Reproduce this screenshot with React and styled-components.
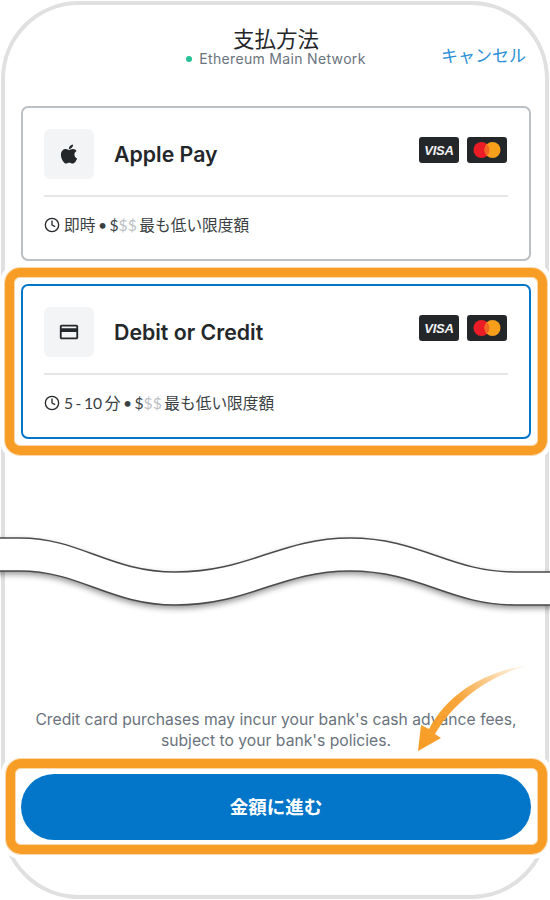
import React from 'react';
import styled, { createGlobalStyle } from 'styled-components';
import { Clock } from 'lucide-react';
import { FaApple } from 'react-icons/fa';
import { MdOutlineCreditCard } from 'react-icons/md';

const GlobalStyle = createGlobalStyle`
  html, body {
    margin: 0;
    padding: 0;
    background: #fff;
  }
  body {
    font-family: Inter, "Noto Sans CJK JP", sans-serif;
    color: #24272a;
  }
`;

const Page = styled.div`
  position: relative;
  width: 550px;
  height: 900px;
  padding: 1px;
  box-sizing: border-box;
  overflow: hidden;
  background: #fff;
`;

const Phone = styled.div`
  box-sizing: border-box;
  height: 898px;
  border: 4px solid #e0e0e0;
  border-radius: 78px;
  padding: 0 14px 55px 16px;
  display: flex;
  flex-direction: column;
`;

const Header = styled.header`
  display: grid;
  grid-template-columns: 1fr auto 1fr;
  height: 101px;
  padding-top: 21px;
  box-sizing: border-box;
  align-items: start;
`;

const TitleBlock = styled.div`
  grid-column: 2;
  display: flex;
  flex-direction: column;
  align-items: center;
`;

const Title = styled.h1`
  margin: 0;
  font: 400 21.5px/24px "Noto Sans CJK JP", sans-serif;
  color: #24272a;
`;

const Network = styled.div`
  display: flex;
  align-items: center;
  gap: 7px;
  font: 400 14px/18px Inter, sans-serif;
  letter-spacing: 0.33px;
  color: #6a737d;
  white-space: nowrap;
`;

const Dot = styled.span`
  width: 6px;
  height: 6px;
  border-radius: 50%;
  background: #28c196;
`;

const Cancel = styled.button`
  grid-column: 3;
  justify-self: end;
  margin: 17px 5px 0 0;
  padding: 0;
  border: 0;
  background: none;
  font: 400 17px/24px "Noto Sans CJK JP", sans-serif;
  color: #2a8fd8;
`;

const Cards = styled.div`
  display: flex;
  flex-direction: column;
  gap: 23px;
`;

const Card = styled.div`
  position: relative;
  box-sizing: border-box;
  height: 155px;
  padding: 21px 21px 0;
  border: 2px solid ${(p) => (p.$selected ? '#0376c9' : '#bbc0c5')};
  border-radius: 7px;
`;

const Ring = styled.div`
  position: absolute;
  inset: ${(p) => p.$inset};
  border: 9px solid #f79c25;
  border-radius: 15px;
  box-shadow: 0 0 0 1px #fbd9ad, inset 0 0 0 1px #fbd9ad, 0 0 0 5px #fff;
  pointer-events: none;
`;

const CardTop = styled.div`
  display: flex;
  align-items: flex-start;
  height: 66px;
  border-bottom: 2px solid #e4e6e8;
`;

const IconBox = styled.div`
  width: 50px;
  height: 50px;
  border-radius: 6px;
  background: #f2f4f6;
  color: #24272a;
  display: flex;
  align-items: center;
  justify-content: center;
  flex: none;
  font-size: 22px;
`;

const CardName = styled.div`
  margin-left: 20px;
  font: 600 21.3px/50px Inter, sans-serif;
  flex: 1;
`;

const Brands = styled.div`
  display: flex;
  gap: 8px;
  margin: 8px 1px 0 0;
`;

const Brand = styled.div`
  width: 40px;
  height: 26px;
  border-radius: 3px;
  background: #24272a;
  display: flex;
  align-items: center;
  justify-content: center;
`;

const VisaMark = styled.span`
  font: italic 700 13px/1 "Liberation Sans", sans-serif;
  color: #f2f3f4;
  letter-spacing: -0.2px;
`;

const Meta = styled.div`
  display: flex;
  align-items: center;
  gap: 4px;
  height: 55px;
  font: 400 15.7px/20px Lato, "Noto Sans CJK JP", sans-serif;
  word-spacing: -1.5px;
  color: #3a3f44;
`;

const Muted = styled.span`
  color: #bbc0c5;
`;

const Spacer = styled.div`
  flex: 1;
`;

const Note = styled.p`
  margin: 0 0 23px;
  text-align: center;
  font: 400 15.7px/21px Inter, sans-serif;
  color: #6a737d;
  white-space: nowrap;
`;

const ButtonWrap = styled.div`
  position: relative;
`;

const Submit = styled.button`
  display: block;
  width: 100%;
  height: 66px;
  padding: 0 0 3px;
  border: 0;
  border-radius: 33px;
  background: #0376c9;
  color: #fff;
  font: 700 18.5px/24px "Noto Sans CJK JP", sans-serif;
`;

const Overlay = styled.svg`
  position: absolute;
  left: 0;
  top: 0;
  pointer-events: none;
`;

const WaveFill = styled.path`
  fill: #fff;
  filter: drop-shadow(0 3px 3px rgba(0, 0, 0, 0.45));
`;

const WaveLine = styled.path`
  fill: none;
  stroke: #4a4a4a;
  stroke-width: 1.5;
`;

const TOP_LINE = 'M -5 538 H 20 C 80 538, 110 572, 175 572 C 250 572, 280 538, 350 538 C 420 538, 450 572, 515 572 H 555';
const BOTTOM_LINE = 'M -5 571 H 20 C 80 571, 110 605, 175 605 C 250 605, 280 571, 350 571 C 420 571, 450 605, 515 605 H 555';
const BAND = `${TOP_LINE} V 605 H 515 C 450 605, 420 571, 350 571 C 280 571, 250 605, 175 605 C 110 605, 80 571, 20 571 H -5 Z`;

const CardBrands = () => (
  <Brands>
    <Brand>
      <VisaMark>VISA</VisaMark>
    </Brand>
    <Brand>
      <svg width="28" height="18" viewBox="0 0 28 18">
        <circle cx="8.5" cy="9" r="8" fill="#eb1c26" />
        <circle cx="19.5" cy="9" r="8" fill="#f79e1b" />
        <path d="M14 3.2a8 8 0 0 1 0 11.6a8 8 0 0 1 0-11.6z" fill="#f26522" />
      </svg>
    </Brand>
  </Brands>
);

const PayCard = ({ icon, name, speed, selected }) => (
  <Card $selected={selected}>
    <CardTop>
      <IconBox>{icon}</IconBox>
      <CardName>{name}</CardName>
      <CardBrands />
    </CardTop>
    <Meta>
      <Clock size={16} strokeWidth={2} color="#24272a" />
      <span>
        {speed} • $<Muted>$$</Muted> 最も低い限度額
      </span>
    </Meta>
    {selected && <Ring $inset="-18px" />}
  </Card>
);

export default function App() {
  return (
    <>
      <GlobalStyle />
      <Page>
        <Phone>
          <Header>
            <TitleBlock>
              <Title>支払方法</Title>
              <Network>
                <Dot />
                Ethereum Main Network
              </Network>
            </TitleBlock>
            <Cancel>キャンセル</Cancel>
          </Header>
          <Cards>
            <PayCard icon={<FaApple />} name="Apple Pay" speed="即時" />
            <PayCard icon={<MdOutlineCreditCard />} name="Debit or Credit" speed="5 - 10 分" selected />
          </Cards>
          <Spacer />
          <Note>
            Credit card purchases may incur your bank's cash advance fees,
            <br />
            subject to your bank's policies.
          </Note>
          <ButtonWrap>
            <Submit>金額に進む</Submit>
            <Ring $inset="-15px -16px -14px -15px" />
          </ButtonWrap>
        </Phone>
        <Overlay width="550" height="900" viewBox="0 0 550 900">
          <defs>
            <linearGradient id="arrowFade" x1="530" y1="665" x2="420" y2="750" gradientUnits="userSpaceOnUse">
              <stop offset="0" stopColor="#f79c25" stopOpacity="0" />
              <stop offset="0.55" stopColor="#f79c25" stopOpacity="0.9" />
              <stop offset="1" stopColor="#f79c25" />
            </linearGradient>
          </defs>
          <WaveFill d={BAND} />
          <WaveLine d={TOP_LINE} />
          <WaveLine d={BOTTOM_LINE} />
          <path
            d="M530 665 C 490 670, 450 690, 429 729 L 421 725 L 418 751 L 441 738 L 435 734 C 455 700, 490 675, 530 665 Z"
            fill="url(#arrowFade)"
          />
        </Overlay>
      </Page>
    </>
  );
}
